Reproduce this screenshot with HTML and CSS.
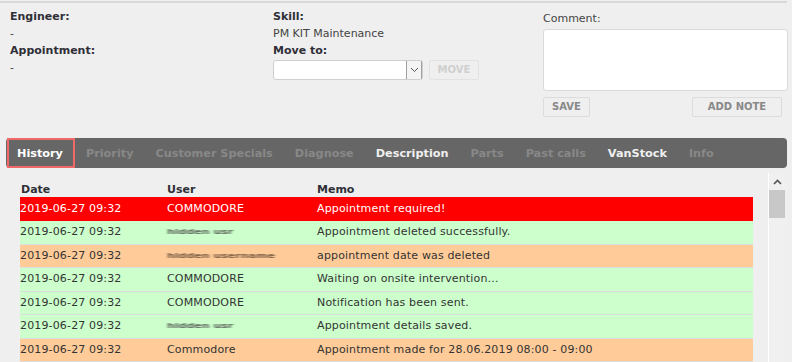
FILE: index.html
```html
<!DOCTYPE html>
<html>
<head>
<meta charset="utf-8">
<link rel="stylesheet" href="styles.css">
</head>
<body>
<div class="page">
  <section class="top">
    <div class="col col-eng">
      <div class="label">Engineer:</div>
      <div class="value">-</div>
      <div class="label">Appointment:</div>
      <div class="value">-</div>
    </div>
    <div class="col col-skill">
      <div class="label">Skill:</div>
      <div class="value">PM KIT Maintenance</div>
      <div class="label">Move to:</div>
      <div class="move-row">
        <div class="select">
          <span class="select-arrow">
            <svg width="9" height="6" viewBox="0 0 9 6"><path d="M1 1 L4.5 4.5 L8 1" fill="none" stroke="#555" stroke-width="1"/></svg>
          </span>
        </div>
        <button class="btn btn-disabled btn-move">MOVE</button>
      </div>
    </div>
    <div class="col col-comment">
      <div class="comment-label">Comment:</div>
      <div class="textarea"></div>
      <div class="comment-actions">
        <button class="btn btn-save">SAVE</button>
        <button class="btn btn-add">ADD NOTE</button>
      </div>
    </div>
  </section>

  <nav class="tabs">
    <span class="tab active">History</span>
    <span class="tab disabled">Priority</span>
    <span class="tab disabled">Customer Specials</span>
    <span class="tab disabled">Diagnose</span>
    <span class="tab enabled">Description</span>
    <span class="tab disabled">Parts</span>
    <span class="tab disabled">Past calls</span>
    <span class="tab enabled">VanStock</span>
    <span class="tab disabled">Info</span>
  </nav>

  <section class="history">
    <div class="table-wrap">
      <table class="log">
        <thead>
          <tr><th class="c-date">Date</th><th class="c-user">User</th><th>Memo</th></tr>
        </thead>
        <tbody>
          <tr class="r-red"><td>2019-06-27 09:32</td><td>COMMODORE</td><td>Appointment required!</td></tr>
          <tr class="r-green"><td>2019-06-27 09:32</td><td><span class="blur">hidden usr</span></td><td>Appointment deleted successfully.</td></tr>
          <tr class="r-orange"><td>2019-06-27 09:32</td><td><span class="blur blur-b">hidden username</span></td><td>appointment date was deleted</td></tr>
          <tr class="r-green"><td>2019-06-27 09:32</td><td>COMMODORE</td><td>Waiting on onsite intervention…</td></tr>
          <tr class="r-green"><td>2019-06-27 09:32</td><td>COMMODORE</td><td>Notification has been sent.</td></tr>
          <tr class="r-green"><td>2019-06-27 09:32</td><td><span class="blur">hidden usr</span></td><td>Appointment details saved.</td></tr>
          <tr class="r-orange"><td>2019-06-27 09:32</td><td>Commodore</td><td>Appointment made for 28.06.2019 08:00 - 09:00</td></tr>
        </tbody>
      </table>
    </div>
    <div class="scrollbar">
      <span class="scroll-up">
        <svg width="9" height="6" viewBox="0 0 9 6"><path d="M1 5 L4.5 1.5 L8 5" fill="none" stroke="#555" stroke-width="1.6"/></svg>
      </span>
      <span class="scroll-thumb"></span>
    </div>
  </section>
</div>
</body>
</html>
```

FILE: styles.css
```css
html, body {
  margin: 0;
  padding: 0;
  background: #efefef;
  height: 100%;
  overflow: hidden;
}

body {
  font-family: "DejaVu Sans", Verdana, sans-serif;
  font-size: 11px;
  color: #333;
}

.page {
  padding-top: 1px;
}

.top {
  display: flex;
  width: 787px;
  height: 128px;
  border-top: 2px solid #d9d9d9;
  box-sizing: border-box;
  padding-top: 5px;
}

.col {
  line-height: 17px;
}

.col-eng {
  width: 263px;
  padding-left: 10px;
}

.col-skill {
  width: 270px;
}

.col-comment {
  width: 244px;
  padding-top: 2px;
}

.label {
  font-weight: bold;
  color: #2f2f38;
}

.value {
  color: #444;
}

.move-row {
  display: flex;
  gap: 6px;
  margin-top: 1px;
}

.select {
  width: 150px;
  height: 20px;
  box-sizing: border-box;
  background: #fff;
  border: 1px solid #cfcfcf;
  border-radius: 3px;
  display: flex;
  justify-content: flex-end;
}

.select-arrow {
  width: 16px;
  height: 18px;
  box-sizing: border-box;
  border-left: 1px solid #a0a0a0;
  border-right: 1px solid #a0a0a0;
  background: #f4f4f4;
  display: flex;
  align-items: center;
  justify-content: center;
}

.btn {
  font-family: "DejaVu Sans", Verdana, sans-serif;
  font-size: 10px;
  font-weight: bold;
  height: 20px;
  padding: 0;
  box-sizing: border-box;
  border: 1px solid #dcdcdc;
  border-radius: 2px;
  background: #efefef;
  color: #888;
  line-height: 18px;
}

.btn-disabled {
  color: #cfcfcf;
  border-color: #e2e2e2;
}

.btn-move {
  width: 50px;
}

.comment-label {
  line-height: 17px;
  color: #444;
}

.textarea {
  width: 245px;
  height: 62px;
  box-sizing: border-box;
  margin-top: 2px;
  background: #fff;
  border: 1px solid #dadada;
  border-radius: 3px;
}

.comment-actions {
  display: flex;
  justify-content: space-between;
  width: 239px;
  margin-top: 6px;
}

.btn-save {
  width: 47px;
}

.btn-add {
  width: 90px;
}

.tabs {
  display: flex;
  align-items: stretch;
  margin: 9px 0 0 6px;
  width: 781px;
  height: 30px;
  box-sizing: border-box;
  padding-left: 1px;
  background: #666;
  border-radius: 4px;
}

.tab {
  display: flex;
  align-items: center;
  padding: 0 9px 0 9px;
  border: 2px solid transparent;
  font-weight: bold;
  font-size: 11.25px;
  white-space: nowrap;
}

.tab.active {
  color: #fff;
  border-color: #f06868;
  padding-right: 10px;
  padding-left: 8px;
}

.tab.enabled {
  color: #efefef;
}

.tab.disabled {
  color: #888;
}

.history {
  display: flex;
  align-items: flex-start;
  height: 200px;
}

.table-wrap {
  padding: 15px 0 0 20px;
  width: 733px;
}

.log {
  width: 733px;
  border-collapse: collapse;
  font-size: 11px;
}

.log th {
  text-align: left;
  font-weight: bold;
  color: #2f2f38;
  line-height: 14px;
  height: 14px;
  padding: 0 0 0 1px;
  vertical-align: bottom;
}

.c-date {
  width: 145px;
}

.c-user {
  width: 149px;
}

.log td {
  height: 23.5px;
  padding: 0;
  box-sizing: border-box;
  line-height: 14px;
  border-bottom: 1px solid #dedede;
  white-space: nowrap;
  letter-spacing: 0.15px;
}

.log td + td {
  padding-left: 1px;
}

.r-red td {
  background: #ff0000;
  color: #fff;
  border-bottom-color: #ff0000;
}

.r-green td {
  background: #ccffcc;
  color: #333;
}

.r-orange td {
  background: #ffcc99;
  color: #333;
}

.blur {
  display: inline-block;
  color: #444;
  font-weight: bold;
  filter: blur(1.4px);
  letter-spacing: 0;
  transform: scaleY(0.55);
  opacity: 0.85;
}

.blur-b {
  color: #5a4230;
}

.scrollbar {
  margin: 5px 0 0 15px;
  width: 17px;
  height: 195px;
  box-sizing: border-box;
  border-left: 1px solid #fff;
  background: #f0f0f0;
  display: flex;
  flex-direction: column;
  align-items: stretch;
}

.scroll-up {
  height: 17px;
  display: flex;
  align-items: center;
  justify-content: center;
}

.scroll-thumb {
  height: 28px;
  background: #c8c8c8;
}
```
